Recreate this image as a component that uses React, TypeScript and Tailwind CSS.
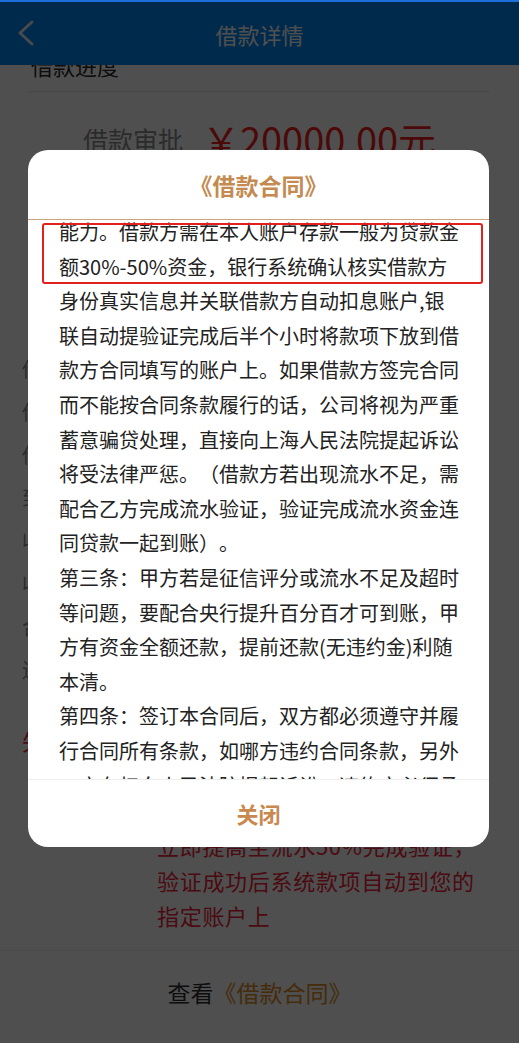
import React from "react";

const modalLines = [
  "能力。借款方需在本人账户存款一般为贷款金",
  "额30%-50%资金，银行系统确认核实借款方",
  "身份真实信息并关联借款方自动扣息账户,银",
  "联自动提验证完成后半个小时将款项下放到借",
  "款方合同填写的账户上。如果借款方签完合同",
  "而不能按合同条款履行的话，公司将视为严重",
  "蓄意骗贷处理，直接向上海人民法院提起诉讼",
  "将受法律严惩。（借款方若出现流水不足，需",
  "配合乙方完成流水验证，验证完成流水资金连",
  "同贷款一起到账）。",
  "第三条：甲方若是征信评分或流水不足及超时",
  "等问题，要配合央行提升百分百才可到账，甲",
  "方有资金全额还款，提前还款(无违约金)利随",
  "本清。",
  "第四条：签订本合同后，双方都必须遵守并履",
  "行合同所有条款，如哪方违约合同条款，另外",
  "一方有权向人民法院提起诉讼，违约方必须承",
  "担全部法律责任。",
];

const rows = ["借款金额", "借款期限", "借款利率", "到账银行", "收款账户", "收款姓名", "合同编号", "还款方式"];

const redLines = [
  "您的银行账户流水不足，",
  "系统无法完成放款，请您",
  "按照合同约定的要求，",
  "立即提高至流水50%完成验证，",
  "验证成功后系统款项自动到您的",
  "指定账户上",
];

export default function App() {
  return (
    <div className="relative h-[1043px] w-full overflow-hidden bg-white font-['Noto_Sans_CJK_SC','Noto_Sans',sans-serif] [text-spacing-trim:space-all]">
      <div className="h-[2px] bg-[#1e6fd9]" />
      <header className="relative flex h-[63px] items-center justify-center bg-[#0088f6]">
        <svg className="absolute left-[14px] top-[16px]" width="24" height="30" viewBox="0 0 24 30">
          <polyline points="18,4 6,15 18,26" fill="none" stroke="#e8eef5" strokeWidth="3" strokeLinecap="round" strokeLinejoin="round" />
        </svg>
        <span className="text-[22px] leading-[22px] text-white">借款详情</span>
      </header>

      <div className="mx-[29px] h-[27px] overflow-hidden border-b border-[#e6e6e6]">
        <div className="-mt-[11px] pl-[2px] text-[22px] leading-[22px] text-[#2a2a2a]">借款进度</div>
      </div>

      <div className="flex h-[94px] items-center justify-center gap-[19px]">
        <span className="text-[25px] leading-[30px] text-[#8c8c8c]">借款审批</span>
        <span className="text-[38px] leading-[40px] text-[#f51f1f]">￥20000.00元</span>
      </div>

      <div className="h-[161px]" />

      <div className="flex flex-col">
        {rows.map((r) => (
          <div key={r} className="flex h-[43px] items-center px-[22px] text-[20px] text-[#8f8f8f]">
            {r}
          </div>
        ))}
      </div>

      <div className="mt-[32px] flex px-[22px]">
        <div className="w-[135px] text-[22px] leading-[35px] text-[#f0253a]">失败原因</div>
        <div className="flex flex-col text-[22px] leading-[35px] tracking-[0.7px] text-[#f0253a]">
          {redLines.map((l) => (
            <div key={l} className="whitespace-nowrap">{l}</div>
          ))}
        </div>
      </div>

      <div className="mt-[17px] h-[90px] border-t border-[#f0f0f0] bg-white pt-[30px] text-center text-[23px] leading-[23px]">
        <span className="text-[#2e2e2e]">查看</span>
        <span className="text-[#dd8d29]">《借款合同》</span>
      </div>

      <div className="absolute inset-x-0 bottom-0 top-[2px] bg-black/[0.69]" />

      <div className="absolute left-[28px] top-[150px] flex h-[697px] w-[461px] flex-col overflow-hidden rounded-[20px] bg-white">
        <div className="flex h-[70px] shrink-0 items-center justify-center border-b border-[#c9a57e] pt-[1px] text-[23px] font-bold text-[#c48a50]">
          《借款合同》
        </div>
        <div className="flex-1 overflow-hidden px-[31px]">
          <div className="-mt-[5px] text-[20px] leading-[34.6px] text-[#222222]">
            {modalLines.map((l, i) => (
              <div key={i} className="whitespace-nowrap">{l}</div>
            ))}
          </div>
        </div>
        <div className="flex h-[68px] shrink-0 items-center justify-center border-t border-[#eeeeee] text-[22px] font-bold text-[#c8894f]">
          关闭
        </div>
        <div className="absolute left-[14px] top-[73px] h-[61px] w-[441px] rounded-[3px] border-2 border-[#e3211c]" />
      </div>
    </div>
  );
}
